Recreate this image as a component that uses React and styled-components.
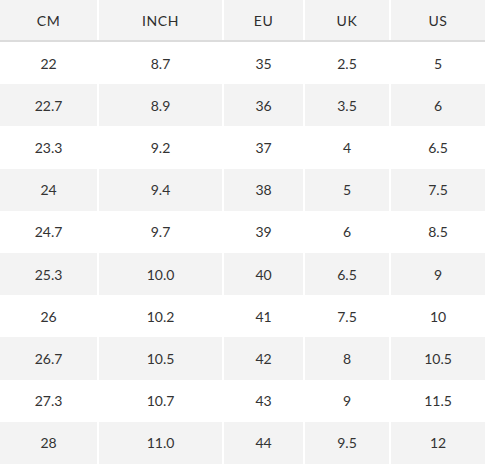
import React from "react";
import styled, { createGlobalStyle } from "styled-components";

const GlobalStyle = createGlobalStyle`
  html, body {
    margin: 0;
    padding: 0;
    background: #fff;
  }
  body {
    font-family: Lato, "Open Sans", sans-serif;
    color: #333;
  }
`;

const COLS = "97px 123px 79px 84px 1fr";

const Table = styled.div`
  width: 485px;
  display: flex;
  flex-direction: column;
`;
const HeaderRow = styled.div`
  display: grid;
  grid-template-columns: ${COLS};
  column-gap: 2px;
  height: 40px;
  border-bottom: 2px solid #dcdcdc;
  background: #fff;
`;
const Row = styled.div`
  display: grid;
  grid-template-columns: ${COLS};
  column-gap: 2px;
  height: 42.2px;
  background: #fff;
`;
const Cell = styled.div`
  display: flex;
  align-items: center;
  justify-content: center;
  font-size: 14px;
  color: #333;
  background: ${p => (p.$shaded ? "#f3f3f3" : "#fff")};
`;
const HeadCell = styled(Cell)`
  background: #f3f3f3;
  letter-spacing: 0.6px;
  font-size: 14px;
  color: #2e2e2e;
`;

const headers = ["CM", "INCH", "EU", "UK", "US"];
const rows = [
  ["22", "8.7", "35", "2.5", "5"],
  ["22.7", "8.9", "36", "3.5", "6"],
  ["23.3", "9.2", "37", "4", "6.5"],
  ["24", "9.4", "38", "5", "7.5"],
  ["24.7", "9.7", "39", "6", "8.5"],
  ["25.3", "10.0", "40", "6.5", "9"],
  ["26", "10.2", "41", "7.5", "10"],
  ["26.7", "10.5", "42", "8", "10.5"],
  ["27.3", "10.7", "43", "9", "11.5"],
  ["28", "11.0", "44", "9.5", "12"]
];

export default function App() {
  return (
    <>
      <GlobalStyle />
      <Table>
        <HeaderRow>
          {headers.map(h => (
            <HeadCell key={h}>{h}</HeadCell>
          ))}
        </HeaderRow>
        {rows.map((r, i) => (
          <Row key={i}>
            {r.map((v, j) => (
              <Cell key={j} $shaded={i % 2 === 1}>
                {v}
              </Cell>
            ))}
          </Row>
        ))}
      </Table>
    </>
  );
}
